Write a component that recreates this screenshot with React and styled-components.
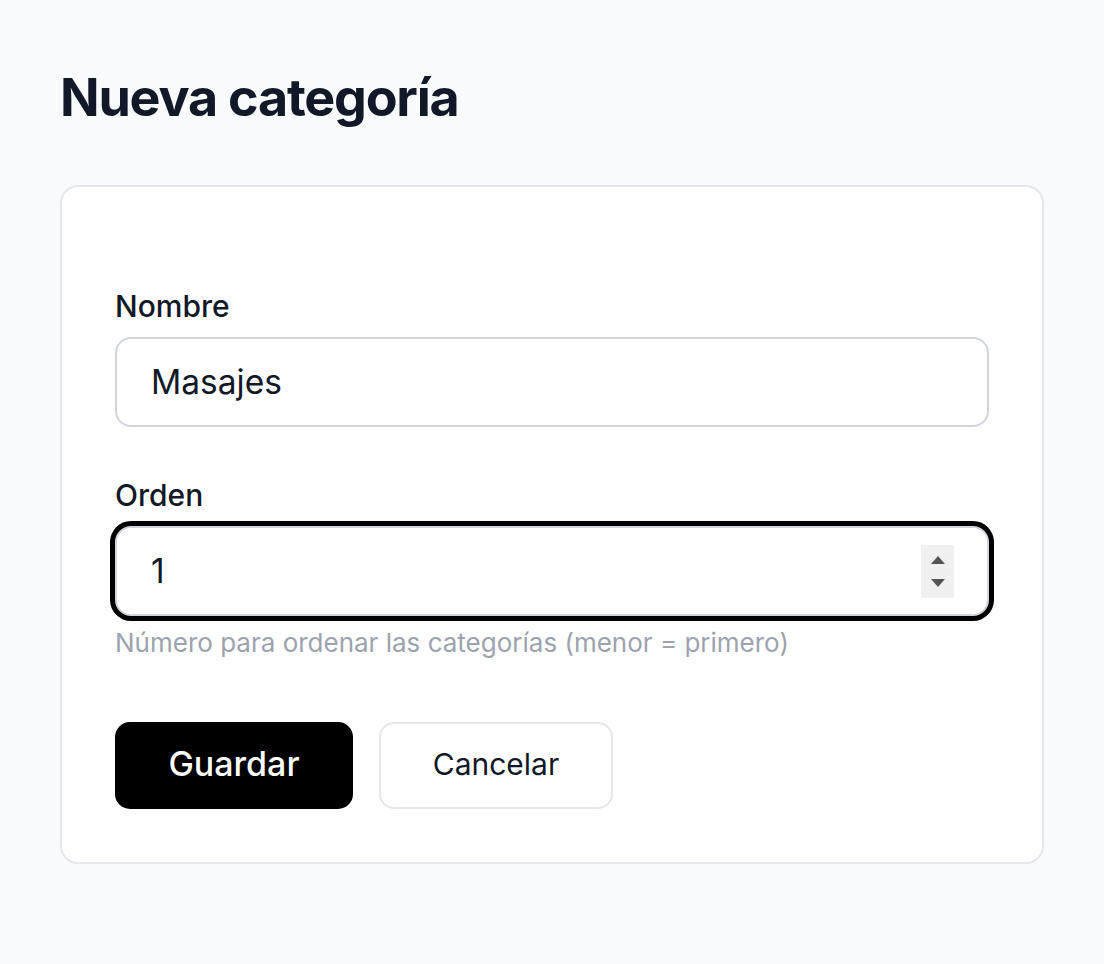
import React from "react";
import styled, { createGlobalStyle } from "styled-components";

const Global = createGlobalStyle`
  html, body { margin: 0; padding: 0; background: #f9fafb; }
  body { font-family: Inter, "Noto Sans", "Liberation Sans", sans-serif; color: #111827; -webkit-font-smoothing: antialiased; }
  * { box-sizing: border-box; }
`;

const Page = styled.div`
  padding: 65px 60px 100px 60px;
  min-height: 964px;
`;

const Title = styled.h1`
  margin: 0 0 55px 0;
  font-size: 52px;
  line-height: 65px;
  font-weight: 700;
  letter-spacing: -1.2px;
  color: #111827;
`;

const Card = styled.div`
  width: 984px;
  background: #ffffff;
  border: 2px solid #e5e7eb;
  border-radius: 18px;
  padding: 97px 53px 53px 53px;
`;

const Form = styled.form`
  display: flex;
  flex-direction: column;
`;

const Field = styled.div`
  display: flex;
  flex-direction: column;
  margin-bottom: ${(p) => p.$mb || 0}px;
`;

const Label = styled.label`
  font-size: 30px;
  line-height: 44px;
  font-weight: 500;
  color: #111827;
  margin-bottom: 9px;
`;

const InputWrap = styled.div`
  position: relative;
`;

const Input = styled.input`
  width: 100%;
  height: 90px;
  border: 2px solid #d1d5db;
  border-radius: 16px;
  padding: 0 34px;
  font-family: inherit;
  font-size: 33.5px;
  color: #111827;
  background: #fff;
  outline: none;
  box-shadow: ${(p) => (p.$focused ? "0 0 0 5px #000" : "none")};
`;

const Spinner = styled.div`
  position: absolute;
  right: 35px;
  top: 19px;
  width: 33px;
  height: 53px;
  background: #f0f0f0;
  display: flex;
  flex-direction: column;
  align-items: center;
  justify-content: center;
  gap: 15px;
`;

const Arrow = styled.span`
  width: 0;
  height: 0;
  border-left: 7px solid transparent;
  border-right: 7px solid transparent;
  ${(p) =>
    p.$up
      ? "border-bottom: 8px solid #555;"
      : "border-top: 8px solid #555;"}
`;

const Help = styled.p`
  margin: 9px 0 0 0;
  font-size: 26px;
  line-height: 36px;
  color: #9ca3af;
`;

const Actions = styled.div`
  display: flex;
  gap: 26px;
  margin-top: 61px;
`;

const Button = styled.button`
  height: 87px;
  width: ${(p) => p.$w}px;
  border-radius: 15px;
  font-family: inherit;
  cursor: pointer;
  border: ${(p) => (p.$primary ? "none" : "2px solid #e5e7eb")};
  background: ${(p) => (p.$primary ? "#000" : "#fff")};
  color: ${(p) => (p.$primary ? "#fff" : "#111827")};
  font-size: ${(p) => (p.$primary ? 34 : 30)}px;
  font-weight: ${(p) => (p.$primary ? 500 : 400)};
  padding: 0 0 4px 0;
`;

export default function App() {
  return (
    <>
      <Global />
      <Page>
        <Title>Nueva categoría</Title>
        <Card>
          <Form onSubmit={(e) => e.preventDefault()}>
            <Field $mb={46}>
              <Label>Nombre</Label>
              <Input type="text" defaultValue="Masajes" />
            </Field>
            <Field>
              <Label>Orden</Label>
              <InputWrap>
                <Input type="text" defaultValue="1" $focused />
                <Spinner>
                  <Arrow $up />
                  <Arrow />
                </Spinner>
              </InputWrap>
              <Help>Número para ordenar las categorías (menor = primero)</Help>
            </Field>
            <Actions>
              <Button type="submit" $primary $w={238}>Guardar</Button>
              <Button type="button" $w={234}>Cancelar</Button>
            </Actions>
          </Form>
        </Card>
      </Page>
    </>
  );
}
